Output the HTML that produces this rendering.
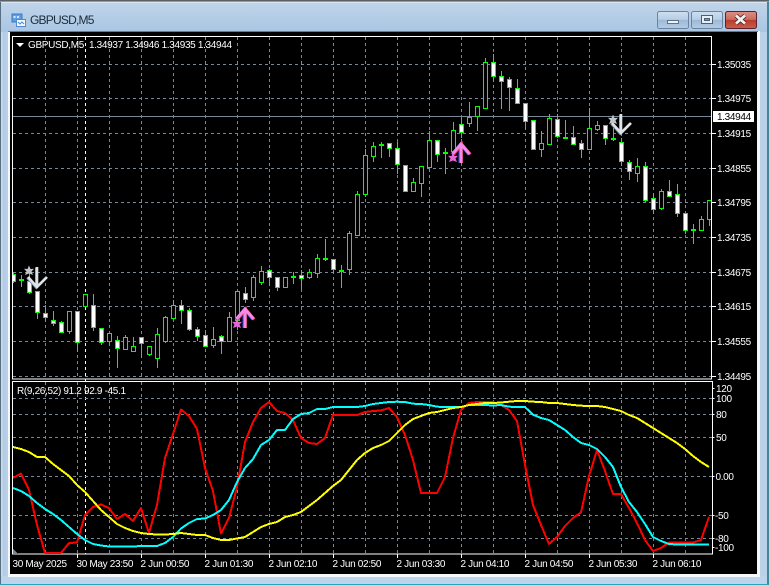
<!DOCTYPE html>
<html lang="en"><head><meta charset="utf-8"><title>GBPUSD,M5</title>
<style>
html,body{margin:0;padding:0;width:769px;height:585px;overflow:hidden;background:#b9d1e9}
svg{display:block;position:absolute;left:0;top:0}
text{font-family:"Liberation Sans",sans-serif;font-size:10px;letter-spacing:-.33px;fill:#fff}
</style></head><body>
<svg width="769" height="585" viewBox="0 0 769 585" xmlns="http://www.w3.org/2000/svg">
<defs>
<linearGradient id="tb" x1="0" y1="0" x2="0" y2="1"><stop offset="0" stop-color="#c2d6ea"/><stop offset="1" stop-color="#a9c6e3"/></linearGradient>
<linearGradient id="lb" x1="0" y1="0" x2="1" y2="0"><stop offset="0" stop-color="#dfe9f3"/><stop offset=".4" stop-color="#b5cce6"/><stop offset="1" stop-color="#b9d1e9"/></linearGradient>
<linearGradient id="bt" x1="0" y1="0" x2="0" y2="1"><stop offset="0" stop-color="#cfe0f0"/><stop offset=".48" stop-color="#b5cde4"/><stop offset=".5" stop-color="#9cb9d6"/><stop offset="1" stop-color="#b4cde6"/></linearGradient>
<linearGradient id="cl" x1="0" y1="0" x2="0" y2="1"><stop offset="0" stop-color="#dd8f85"/><stop offset=".48" stop-color="#ca6a5e"/><stop offset=".5" stop-color="#b83b2a"/><stop offset="1" stop-color="#c9604d"/></linearGradient>
<clipPath id="m"><rect x="13" y="37" width="698" height="342"/></clipPath>
<clipPath id="i"><rect x="13" y="382" width="699" height="172"/></clipPath>
</defs>
<!-- window chrome -->
<rect width="769" height="585" fill="#b9d1e9"/>
<rect x="0" y="0" width="769" height="32" fill="url(#tb)"/>
<rect x="0" y="32" width="8" height="553" fill="url(#lb)"/>
<rect x="0" y="0" width="769" height="1.5" fill="#5a6066"/>
<rect x="0" y="2" width="769" height="1" fill="#dbe6f0"/>
<rect x="0" y="2" width="1" height="583" fill="#58707f"/>
<rect x="767" y="2" width="2" height="583" fill="#3e8a9a"/>
<rect x="0" y="584" width="769" height="1" fill="#2aa5b5"/>
<rect x="1" y="576" width="766" height="8" fill="#bcd4ec"/>
<rect x="8" y="31" width="752" height="546" fill="#f4f8fb"/>
<rect x="8" y="31" width="750" height="1" fill="#5f7c99"/>
<rect x="10" y="32" width="747" height="542" fill="#000"/>
<!-- title icon -->
<rect x="12" y="14" width="10" height="8" fill="#5e9ee6" stroke="#3a78c0"/>
<rect x="13.5" y="16" width="2" height="2" fill="#d9e9fa"/><rect x="17" y="16" width="2" height="2" fill="#d9e9fa"/>
<rect x="16.5" y="19.5" width="9" height="7" fill="#f4f8fd" stroke="#4f8ad0"/>
<path d="M18 22l2 2 2-2 2 2" fill="none" stroke="#4f8ad0"/>
<text x="30" y="24" style="font-size:12px;letter-spacing:-.78px;fill:#1c2b3a">GBPUSD,M5</text>
<!-- buttons -->
<rect x="657.5" y="11.5" width="31" height="17" rx="2" fill="url(#bt)" stroke="#6c83a0"/>
<rect x="667.5" y="20.5" width="11" height="3" fill="#eef3f8" stroke="#5d6f85"/>
<rect x="691.5" y="11.5" width="31" height="17" rx="2" fill="url(#bt)" stroke="#6c83a0"/>
<rect x="701.5" y="15.5" width="11" height="8" fill="#e8eef5" stroke="#4d5f75"/>
<rect x="704.5" y="18.5" width="5" height="2" fill="#7f96ad" stroke="#4d5f75"/>
<rect x="725.5" y="11.5" width="31" height="17" rx="2" fill="url(#cl)" stroke="#5d2030"/>
<path d="M736 15.5l9 8M745 15.5l-9 8" stroke="#4a2a2a" stroke-width="4.5" fill="none"/>
<path d="M736 15.5l9 8M745 15.5l-9 8" stroke="#f2f2f2" stroke-width="2.8" fill="none"/>

<!-- main grid -->
<g shape-rendering="crispEdges" fill="none" stroke-width="1">
<path clip-path="url(#m)" stroke="#778899" stroke-dasharray="3 3" d="M13 64.5H711M13 98.5H711M13 133.5H711M13 168.5H711M13 202.5H711M13 237.5H711M13 272.5H711M13 306.5H711M13 341.5H711M13 376.5H711M45.5 37V379M77.5 37V379M109.5 37V379M141.5 37V379M173.5 37V379M205.5 37V379M237.5 37V379M269.5 37V379M301.5 37V379M333.5 37V379M365.5 37V379M397.5 37V379M429.5 37V379M461.5 37V379M493.5 37V379M525.5 37V379M557.5 37V379M589.5 37V379M621.5 37V379M653.5 37V379M685.5 37V379"/>
<path stroke="#fff" stroke-dasharray="3 3" d="M85.5 37V554"/>
<path stroke="#778899" d="M13 116.5H711"/>
</g>
<g fill="none" stroke-width="1" shape-rendering="geometricPrecision">
<!-- wicks -->
<path clip-path="url(#m)" stroke="#00ff00" d="M13.5 272V283M21.5 275V287M29.5 270V294M37.5 291V319M45.5 305V322M53.5 311V326M61.5 321V333M69.5 311V334M77.5 311V352M85.5 294V307M93.5 294V331M101.5 328V345M109.5 333V346M117.5 336V368M125.5 335V350M133.5 337V352M141.5 337V358M149.5 346V356M157.5 328V368M165.5 316V343M173.5 300V319M181.5 300V324M189.5 308V331M197.5 327V341M205.5 330V347M213.5 327V348M221.5 335V354M229.5 312V342M237.5 291V330M245.5 287V303M253.5 275V301M261.5 266V285M269.5 269V286M277.5 277V291M285.5 277V288M293.5 272V284M301.5 270V289M309.5 269V279M317.5 254V278M325.5 239V261M333.5 259V273M341.5 265V288M349.5 231V275M357.5 191V236M365.5 149V197M373.5 142V162M381.5 142V158M389.5 143V157M397.5 142V174M405.5 165V192M413.5 178V192M421.5 166V197M429.5 131V168M437.5 140V162M445.5 148V174M453.5 122V152M461.5 118V138M469.5 102V127M477.5 106V131M485.5 58V109M493.5 54V82M501.5 71V109M509.5 77V111M517.5 79V104M525.5 103V129M533.5 120V150M541.5 131V157M549.5 114V145M557.5 114V138M565.5 120V139M573.5 126V145M581.5 140V158M589.5 108V150M597.5 121V131M605.5 125V145M613.5 128V141M621.5 138V166M629.5 160V180M637.5 158V182M645.5 162V202M653.5 193V214M661.5 189V210M669.5 180V197M677.5 184V217M685.5 213V234M693.5 224V244M701.5 216V231M709.5 200V226"/>
<!-- bullish (black) bodies -->
<path clip-path="url(#m)" fill="#000" stroke="#00ff00" d="M19.5 279.5h4v1h-4zM67.5 311.5h4v20h-4zM83.5 294.5h4v12h-4zM107.5 333.5h4v8h-4zM123.5 337.5h4v12h-4zM131.5 346.5h4v5h-4zM147.5 346.5h4v8h-4zM155.5 334.5h4v24h-4zM163.5 317.5h4v24h-4zM171.5 305.5h4v13h-4zM211.5 339.5h4v6h-4zM227.5 317.5h4v24h-4zM235.5 291.5h4v29h-4zM251.5 277.5h4v20h-4zM259.5 271.5h4v11h-4zM283.5 277.5h4v10h-4zM291.5 276.5h4v1h-4zM307.5 272.5h4v5h-4zM315.5 258.5h4v15h-4zM323.5 258.5h4v1h-4zM339.5 270.5h4v1h-4zM347.5 233.5h4v36h-4zM355.5 194.5h4v41h-4zM363.5 155.5h4v39h-4zM371.5 146.5h4v10h-4zM379.5 144.5h4v1h-4zM411.5 182.5h4v9h-4zM419.5 166.5h4v17h-4zM427.5 140.5h4v27h-4zM443.5 152.5h4v1h-4zM451.5 130.5h4v21h-4zM467.5 117.5h4v6h-4zM475.5 106.5h4v10h-4zM483.5 62.5h4v46h-4zM539.5 143.5h4v6h-4zM547.5 118.5h4v26h-4zM563.5 137.5h4v1h-4zM587.5 128.5h4v21h-4zM595.5 125.5h4v4h-4zM611.5 138.5h4v1h-4zM635.5 166.5h4v7h-4zM659.5 191.5h4v17h-4zM691.5 229.5h4v1h-4zM699.5 219.5h4v11h-4zM707.5 200.5h4v19h-4z"/>
<!-- bearish (white) bodies -->
<path clip-path="url(#m)" fill="#fff" stroke="#00ff00" d="M11.5 274.5h4v7h-4zM27.5 281.5h4v11h-4zM35.5 291.5h4v21h-4zM43.5 313.5h4v4h-4zM51.5 320.5h4v3h-4zM59.5 322.5h4v10h-4zM75.5 311.5h4v31h-4zM91.5 305.5h4v22h-4zM99.5 328.5h4v14h-4zM115.5 340.5h4v8h-4zM139.5 337.5h4v6h-4zM179.5 305.5h4v5h-4zM187.5 310.5h4v19h-4zM195.5 329.5h4v7h-4zM203.5 335.5h4v11h-4zM219.5 336.5h4v5h-4zM243.5 293.5h4v6h-4zM267.5 270.5h4v7h-4zM275.5 277.5h4v10h-4zM299.5 275.5h4v3h-4zM331.5 259.5h4v10h-4zM387.5 143.5h4v5h-4zM395.5 148.5h4v16h-4zM403.5 165.5h4v26h-4zM435.5 140.5h4v14h-4zM459.5 124.5h4v8h-4zM491.5 62.5h4v14h-4zM499.5 76.5h4v5h-4zM507.5 79.5h4v8h-4zM515.5 88.5h4v15h-4zM523.5 103.5h4v18h-4zM531.5 120.5h4v29h-4zM555.5 119.5h4v17h-4zM571.5 137.5h4v7h-4zM579.5 143.5h4v6h-4zM603.5 125.5h4v13h-4zM619.5 142.5h4v19h-4zM627.5 162.5h4v9h-4zM643.5 166.5h4v34h-4zM651.5 198.5h4v11h-4zM667.5 191.5h4v5h-4zM675.5 194.5h4v19h-4zM683.5 213.5h4v17h-4z"/>
</g>
<g shape-rendering="crispEdges" fill="none" stroke-width="1">
<!-- frames -->
<rect x="12.5" y="36.5" width="699" height="342.5" stroke="#fff"/>
<rect x="12.5" y="381.5" width="700" height="172.5" stroke="#fff"/>
<path stroke="#fff" d="M712 64.5h4M712 98.5h4M712 133.5h4M712 168.5h4M712 202.5h4M712 237.5h4M712 272.5h4M712 306.5h4M712 341.5h4M712 376.5h4M713 388.5h1.500M713 398.5h1.500M713 414.5h1.500M713 437.5h1.500M713 476.5h1.500M713 515.5h1.500M713 538.5h1.500M713 547.5h1.500M77.5 554v4M141.5 554v4M205.5 554v4M269.5 554v4M333.5 554v4M397.5 554v4M461.5 554v4M525.5 554v4M589.5 554v4M653.5 554v4"/>
</g>
<!-- signal arrows -->
<g fill="none" stroke-linejoin="miter">
<g stroke-width="3">
<path d="M236.5 319.5L244.5 310V328M253.5 319.5L245.5 310" stroke="#3a3ad0" transform="translate(-.6 0)"/>
<path d="M236.5 319.5L244.5 310V328M253.5 319.5L245.5 310" stroke="#e03048" transform="translate(.9 0)"/>
<path d="M236.5 319L245 309L253.5 319M245 309V328" stroke="#f48ae8"/>
<path d="M452.5 154.5L460.5 145V163M469.5 154.5L461.5 145" stroke="#3a3ad0" transform="translate(-.6 0)"/>
<path d="M452.5 154.5L460.5 145V163M469.5 154.5L461.5 145" stroke="#e03048" transform="translate(.9 0)"/>
<path d="M452.5 154L461 144L469.5 154M461 144V163" stroke="#f48ae8"/>
</g>
<g stroke-width="2.6">
<path d="M28 277L37 287L47 277M37 287V267" stroke="#7d93a8" transform="translate(-.7 .6)"/>
<path d="M28 277L37 287L47 277M37 287V267" stroke="#dfe3e8"/>
<path d="M612 123L621 133L631 123M621 133V114" stroke="#7d93a8" transform="translate(-.7 .6)"/>
<path d="M612 123L621 133L631 123M621 133V114" stroke="#dfe3e8"/>
</g>
<path fill="#e566d8" d="M237 318.5l1.5 3.5 3.5-.2-2.5 2.7 1.5 3.5-4-1.5-4 1.5 1.5-3.5-2.5-2.7 3.5.2z"/>
<path fill="#e566d8" d="M453 152.5l1.5 3.5 3.5-.2-2.5 2.7 1.5 3.5-4-1.5-4 1.5 1.5-3.5-2.5-2.7 3.5.2z"/>
<path fill="#c2c6cc" d="M29 265.5l1.5 3.5 3.5-.2-2.5 2.7 1.5 3.5-4-1.5-4 1.5 1.5-3.5-2.5-2.7 3.5.2z"/>
<path fill="#c2c6cc" d="M613 114.5l1.5 3.5 3.5-.2-2.5 2.7 1.5 3.5-4-1.5-4 1.5 1.5-3.5-2.5-2.7 3.5.2z"/>
</g>
<!-- indicator grid -->
<g shape-rendering="crispEdges" fill="none">
<path clip-path="url(#i)" stroke="#778899" stroke-dasharray="3 3" d="M13 398.5H712M13 414.5H712M13 437.5H712M13 476.5H712M13 515.5H712M13 538.5H712M45.5 382V554M77.5 382V554M109.5 382V554M141.5 382V554M173.5 382V554M205.5 382V554M237.5 382V554M269.5 382V554M301.5 382V554M333.5 382V554M365.5 382V554M397.5 382V554M429.5 382V554M461.5 382V554M493.5 382V554M525.5 382V554M557.5 382V554M589.5 382V554M621.5 382V554M653.5 382V554M685.5 382V554"/>
<path fill="#778899" stroke="none" d="M13 549l5 5h-5z"/>
</g>
<!-- indicator lines -->
<g fill="none" stroke-width="2" stroke-linejoin="round" shape-rendering="crispEdges" clip-path="url(#i)">
<polyline stroke="#ff0000" points="13,478 21,473.5 29,490 37,525 45,553 53,553 61,553 69,543 77,542.5 85,515 93,507 101,504.5 109,508 117,519 125,514 133,521 141,508 149,533 157,505 165,458 173,434 181,409.5 189,416 197,429 205,468 213,491 221,533.5 229,518 237,487 245,442 253,422 261,408 269,402 277,411 285,413 293,420 301,438 309,443 317,444 325,438 333,415 341,415 349,415 357,415 365,412 373,411 381,410.5 389,408 397,417 405,435 413,460 421,493 429,493 437,493 445,477 453,438 461,410 469,403 477,402 485,402 493,402 501,405 509,410 517,421 525,465 533,505 541,525 549,544 557,537 565,526 573,518 581,512.5 589,476 597,450 605,471 613,494 621,494 629,508 637,523 645,540 653,551 661,548 669,542.5 677,542.5 685,542.5 693,542.5 701,540 709,517"/>
<polyline stroke="#00ffff" points="13,488 21,491 29,496 37,503 45,509 53,514 61,520 69,527 77,534 85,540 93,544 101,545.5 109,546.5 117,546.5 125,546.5 133,546.5 141,546 149,546 157,546 165,543 173,537 181,528.5 189,523 197,519 205,518.5 213,515 221,510 229,500 237,482 245,468 253,459 261,445 269,440 277,430 285,430 293,419 301,414 309,413 317,409 325,409 333,407 341,407 349,407 357,407 365,406 373,404 381,403 389,402 397,401.7 405,402 413,403.7 421,404 429,405 437,406.7 445,407 453,407 461,407 469,405 477,405 485,405 493,405.5 501,405 509,406.7 517,407 525,407 533,414.7 541,418 549,420 557,425 565,430 573,437 581,443 589,445 597,449 605,457 613,467 621,487 629,502 637,512 645,524 653,537 661,541 669,544 677,544.5 685,544.5 693,544.5 701,544.5 709,544.5"/>
<polyline stroke="#ffff00" points="13,447 21,449 29,452 37,457 45,457 53,464 61,470 69,476 77,485 85,492 93,501 101,510 109,517 117,524 125,528 133,531 141,533 149,534 157,534.5 165,534.5 173,534 181,533 189,534 197,535 205,535 213,538 221,540 229,540 237,538.5 245,537 253,532 261,527 269,524 277,522 285,517 293,515 301,512 309,506 317,500 325,493 333,486 341,480 349,470 357,460 365,453 373,448 381,445 389,441 397,433 405,425 413,419 421,416 429,413 437,412 445,410 453,408 461,407 469,405 477,404 485,403 493,403 501,402.5 509,401.7 517,401 525,401 533,401.7 541,402 549,403 557,403 565,404 573,405 581,405.7 589,406 597,406 605,407 613,409 621,411 629,415 637,418 645,423 653,428 661,433 669,438 677,443 685,449 693,456 701,462 709,467"/>
</g>
<!-- text -->
<path fill="#fff" d="M16 43h8l-4 4z"/>
<text x="28" y="48">GBPUSD,M5</text>
<text x="89" y="48">1.34937 1.34946 1.34935 1.34944</text>
<text x="17" y="394">R(9,26,52) 91.2 92.9 -45.1</text>
<g>
<text x="717" y="68">1.35035</text>
<text x="717" y="102">1.34975</text>
<text x="717" y="137">1.34915</text>
<text x="717" y="172">1.34855</text>
<text x="717" y="206">1.34795</text>
<text x="717" y="241">1.34735</text>
<text x="717" y="276">1.34675</text>
<text x="717" y="310">1.34615</text>
<text x="717" y="345">1.34555</text>
<text x="717" y="380">1.34495</text>
</g>
<rect x="713" y="111" width="41" height="11" fill="#fff"/>
<text x="717" y="120" style="fill:#000">1.34944</text>
<g>
<text x="716" y="392">120</text>
<text x="716" y="402">100</text>
<text x="716" y="418">80</text>
<text x="716" y="441">50</text>
<text x="715.5" y="480">0.00</text>
<text x="715" y="519">-50</text>
<text x="715" y="542">-80</text>
<text x="715" y="551">-100</text>
</g>
<g>
<text x="12.5" y="567">30 May 2025</text>
<text x="76.5" y="567">30 May 23:50</text>
<text x="140.5" y="567">2 Jun 00:50</text>
<text x="204.5" y="567">2 Jun 01:30</text>
<text x="268.5" y="567">2 Jun 02:10</text>
<text x="332.5" y="567">2 Jun 02:50</text>
<text x="396.5" y="567">2 Jun 03:30</text>
<text x="460.5" y="567">2 Jun 04:10</text>
<text x="524.5" y="567">2 Jun 04:50</text>
<text x="588.5" y="567">2 Jun 05:30</text>
<text x="652.5" y="567">2 Jun 06:10</text>
</g>
</svg>
</body></html>
